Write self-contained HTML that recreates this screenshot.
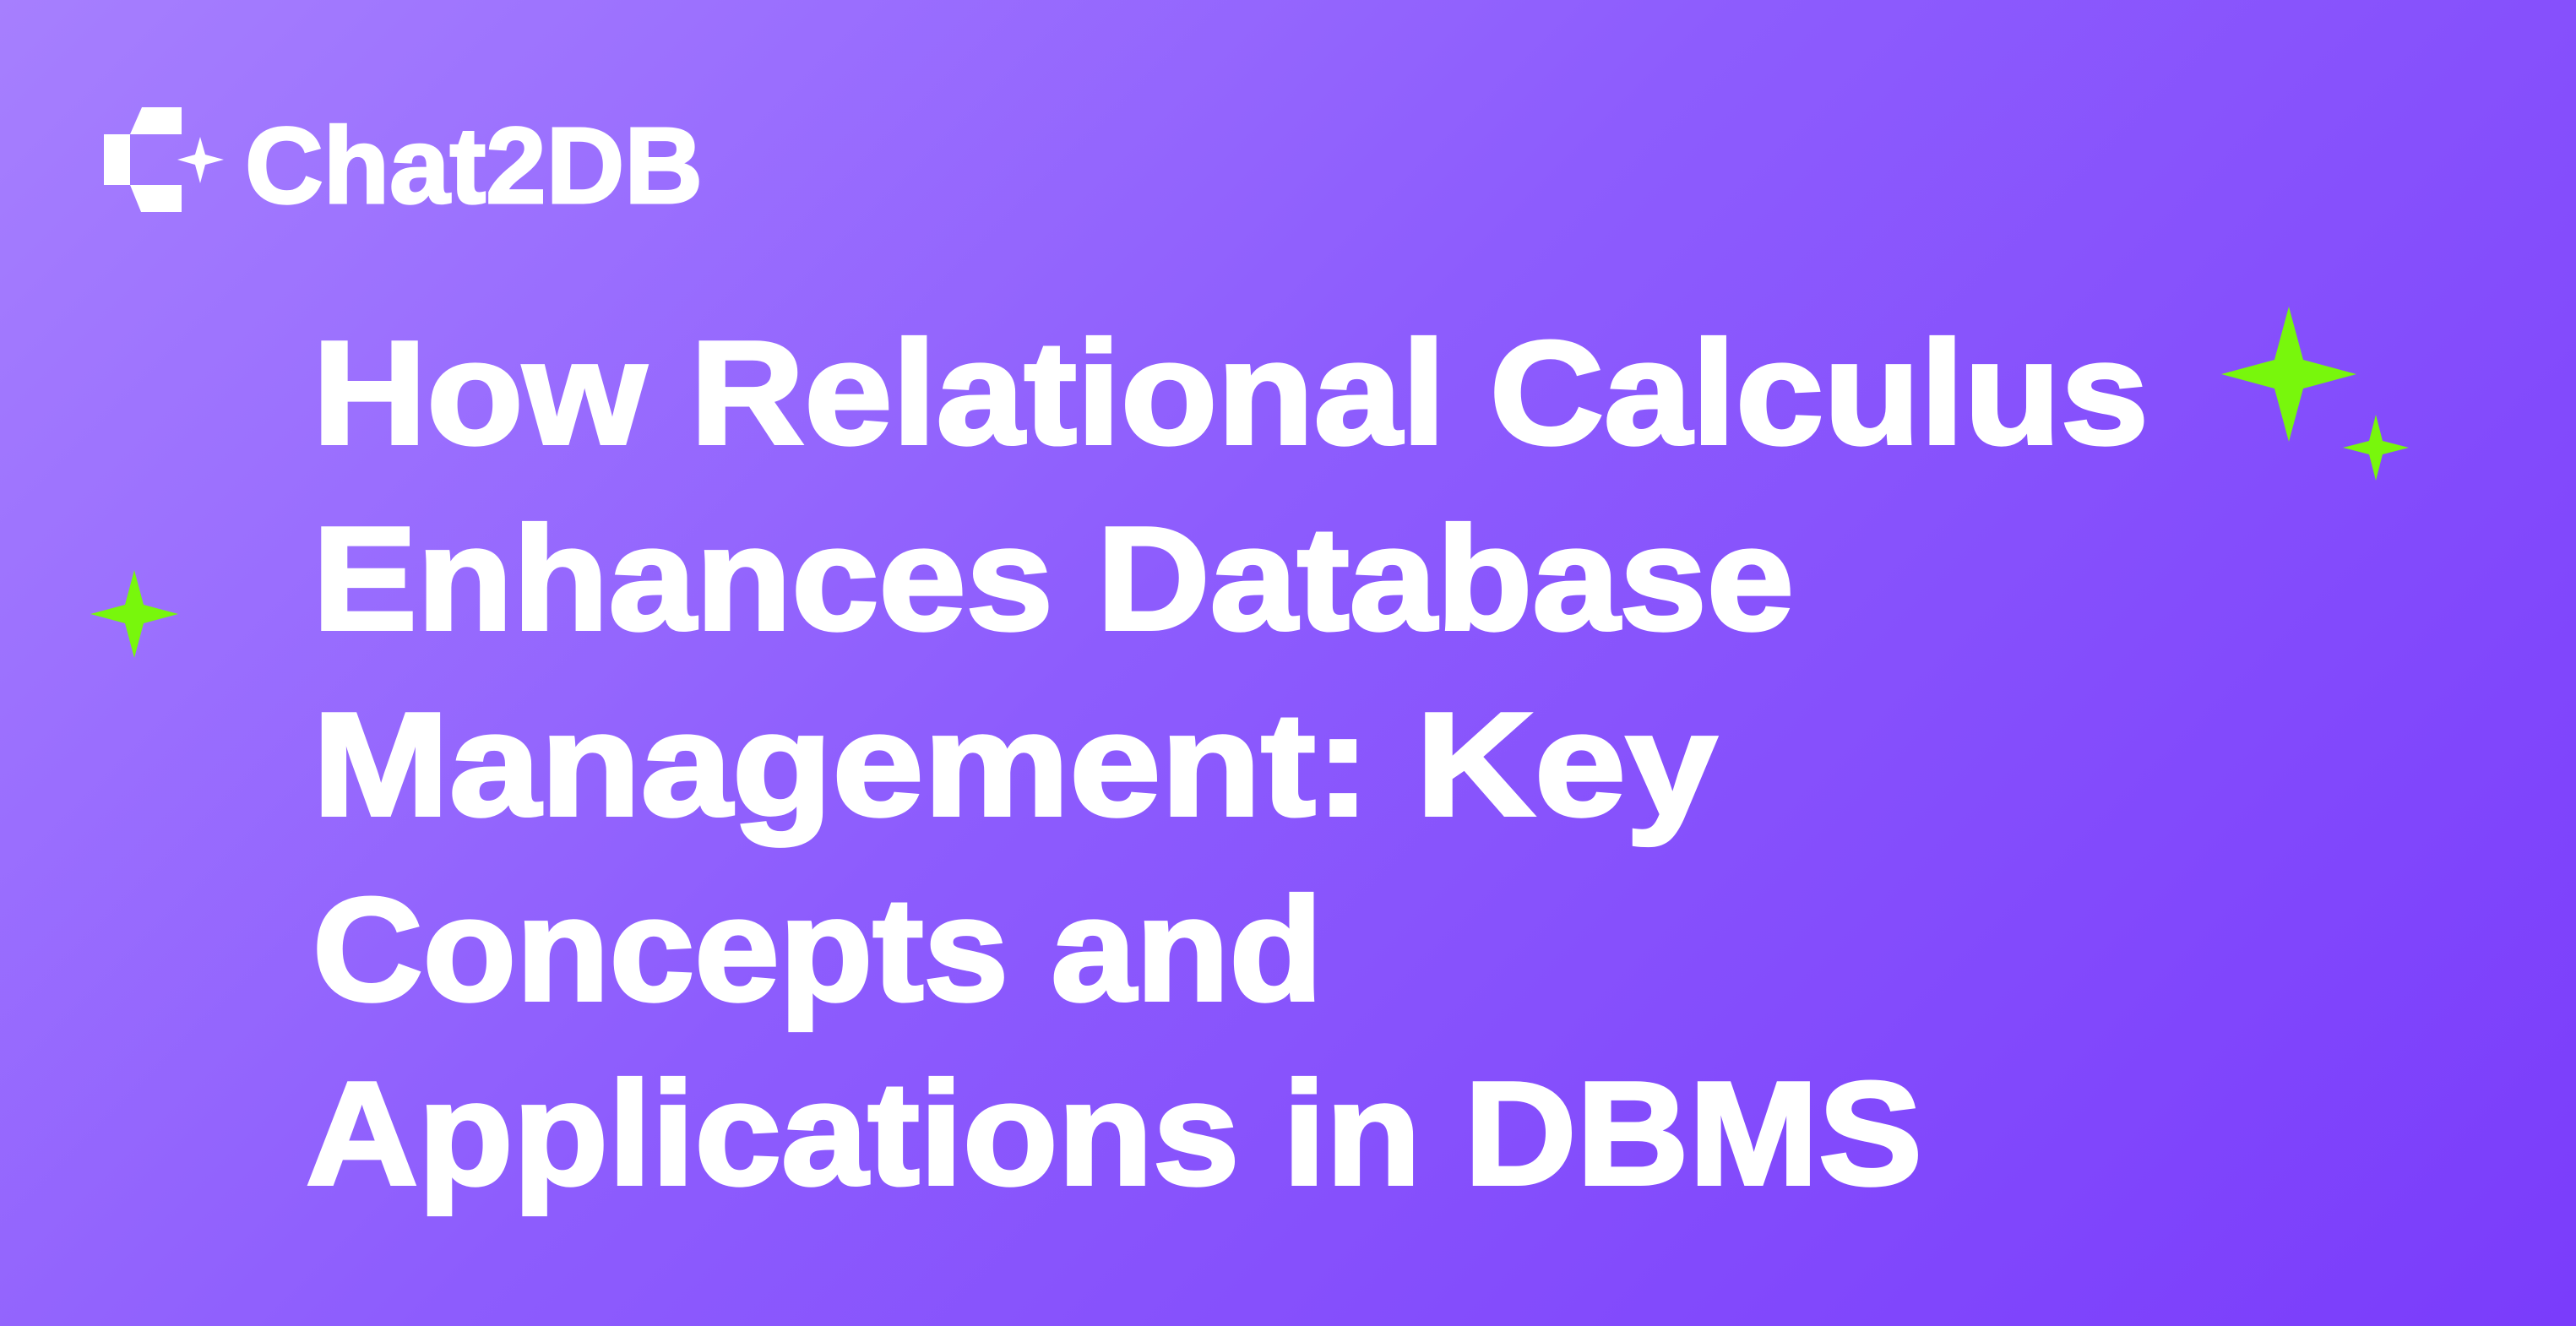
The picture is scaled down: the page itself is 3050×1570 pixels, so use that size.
<!DOCTYPE html>
<html><head><meta charset="utf-8"><style>
html,body{margin:0;padding:0}
body{width:3050px;height:1570px;overflow:hidden;background:linear-gradient(135deg,#a67ffe 0%,#8d5cfd 45%,#7a3cfb 100%)}
svg{display:block}
</style></head><body>
<svg width="3050" height="1570" viewBox="0 0 3050 1570" xmlns="http://www.w3.org/2000/svg">
<g fill="#fff">
<polygon points="168,127 215,127 215,159 154,159"/>
<rect x="123" y="159" width="31" height="60"/>
<polygon points="154,219 215,219 215,251 167,251"/>
<polygon points="237,162 243,183 265,189 243,195 237,217 231,195 210,189 231,183"/>
<text x="290" y="240" textLength="542" lengthAdjust="spacingAndGlyphs" font-family="Liberation Sans, sans-serif" font-weight="bold" font-size="128" stroke="#fff" stroke-width="3">Chat2DB</text>
</g>
<g fill="#fff" stroke="#fff" stroke-width="4" font-family="Liberation Sans, sans-serif" font-weight="bold" font-size="174">
<text x="370" y="525" textLength="2174" lengthAdjust="spacingAndGlyphs">How Relational Calculus</text>
<text x="370" y="745" textLength="1754" lengthAdjust="spacingAndGlyphs">Enhances Database</text>
<text x="370" y="965" textLength="1663" lengthAdjust="spacingAndGlyphs">Management: Key</text>
<text x="370" y="1184" textLength="1196" lengthAdjust="spacingAndGlyphs">Concepts and</text>
<text x="362" y="1402" textLength="1914" lengthAdjust="spacingAndGlyphs">Applications in DBMS</text>
</g>
<g fill="#78f70c">
<polygon points="2710,363 2727,426 2790,443 2727,460 2710,523 2693,460 2630,443 2693,426"/>
<polygon points="2813,491 2821,522 2852,530 2821,538 2813,569 2805,538 2774,530 2805,522"/>
<polygon points="159,675 170,716 211,727 170,738 159,779 148,738 107,727 148,716"/>
</g>
</svg>
</body></html>
